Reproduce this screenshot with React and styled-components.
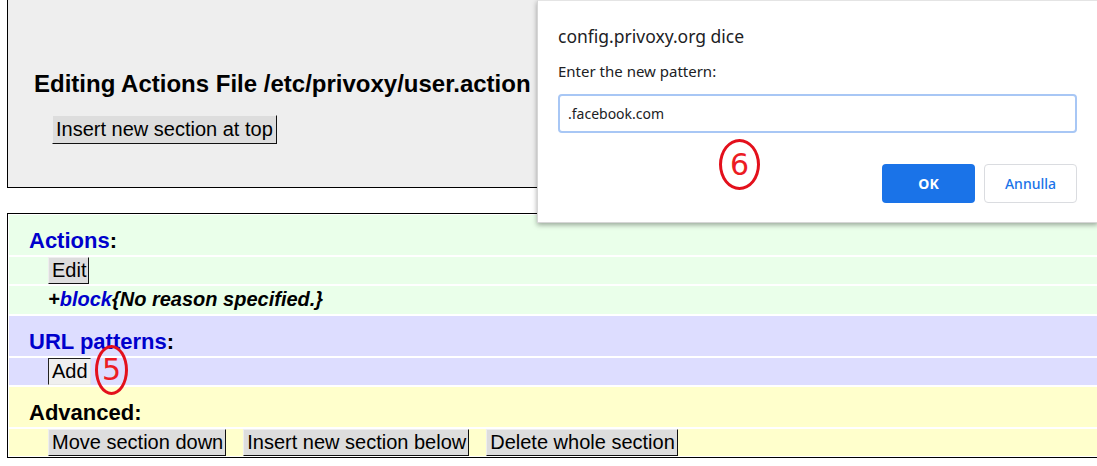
import React from 'react';
import styled, { createGlobalStyle } from 'styled-components';

const GlobalStyle = createGlobalStyle`
    html, body {
        margin: 0;
        padding: 0;
        background: #ffffff;
        overflow: hidden;
    }
    body {
        font-family: "Liberation Sans", Arial, sans-serif;
    }
`

const App = () => {
  return (
    <Page>
        <GlobalStyle />
        <TopBox>
            <Heading>Editing Actions File /etc/privoxy/user.action</Heading>
            <TopButton>Insert new section at top</TopButton>
        </TopBox>

        <SectionTable>
            <SectionHead bg="#eaffea">
                <Label>Actions</Label>:
            </SectionHead>
            <ButtonRow bg="#eaffea">
                <OldButton>Edit</OldButton>
            </ButtonRow>
            <TextRow bg="#eaffea">
                +<ActionName>block</ActionName>{'{No reason specified.}'}
            </TextRow>

            <SectionHead bg="#ddddff">
                <Label>URL patterns</Label>:
            </SectionHead>
            <ButtonRow bg="#ddddff">
                <OldButton pressed>Add</OldButton>
            </ButtonRow>

            <SectionHead bg="#ffffcc">Advanced:</SectionHead>
            <ButtonRow bg="#ffffcc">
                <OldButton>Move section down</OldButton>
                <OldButton>Insert new section below</OldButton>
                <OldButton>Delete whole section</OldButton>
            </ButtonRow>
        </SectionTable>

        <Marker left={95} top={345} w={33} h={50}>5</Marker>

        <PromptDialog>
            <DialogTitle>config.privoxy.org dice</DialogTitle>
            <DialogMessage>Enter the new pattern:</DialogMessage>
            <PromptInput>.facebook.com</PromptInput>
            <DialogActions>
                <PrimaryButton>OK</PrimaryButton>
                <SecondaryButton>Annulla</SecondaryButton>
            </DialogActions>
        </PromptDialog>

        <Marker left={719} top={139} w={41} h={51}>6</Marker>
    </Page>
  )
}

const Page = styled.div`
    position: relative;
    width: 1097px;
    height: 466px;
    overflow: hidden;
    padding-left: 7px;
    box-sizing: border-box;
`

const TopBox = styled.div`
    margin-top: -20px;
    margin-right: -6px;
    border: 1px solid #000;
    background-color: #eeeeee;
    padding: 89px 0 43px 26px;
    display: flex;
    flex-direction: column;
    align-items: flex-start;
`

const Heading = styled.h2`
    margin: 0;
    font-size: 24px;
    line-height: 28px;
    font-weight: bold;
    color: #000;
`

const OldButton = styled.button`
    font-family: "Liberation Sans", Arial, sans-serif;
    font-size: 20px;
    line-height: 23px;
    padding: 1px 2px 1px 3px;
    margin: 0;
    color: #000;
    background-color: ${props => props.pressed ? '#efefef' : '#dddddd'};
    border: 1px solid;
    border-color: ${props => props.pressed
        ? '#222 #e6e6e6 #e6e6e6 #222'
        : '#eeeeee #111 #111 #eeeeee'};
    border-radius: 0;
    cursor: pointer;
`

const TopButton = styled(OldButton)`
    margin: 17px 0 0 18px;
    padding: 2px 3px;
`

const SectionTable = styled.div`
    margin-top: 25px;
    margin-right: -6px;
    border: 1px solid #000;
    padding: 1px;
    display: flex;
    flex-direction: column;
    gap: 2px;
    background: #fff;
`

const SectionHead = styled.div`
    background-color: ${props => props.bg};
    padding: 13px 20px 2px;
    font-size: 22px;
    line-height: 25px;
    font-weight: bold;
    color: #000;
`

const Label = styled.span`
    color: #0000cc;
`

const ButtonRow = styled.div`
    background-color: ${props => props.bg};
    padding-left: 39px;
    display: flex;
    gap: 17px;
    height: 27px;
`

const TextRow = styled.div`
    background-color: ${props => props.bg};
    padding: 2px 0 3px 39px;
    font-size: 20px;
    line-height: 23px;
    font-weight: bold;
    font-style: italic;
    color: #000;
`

const ActionName = styled.span`
    color: #0000cc;
`

const PromptDialog = styled.div`
    position: absolute;
    left: 537px;
    top: 0;
    width: 561px;
    box-sizing: border-box;
    padding: 23px 20px 19px;
    background: #fff;
    border: 1px solid #d6d6d6;
    border-top-color: #e4e4e4;
    box-shadow: 0 2px 5px rgba(0, 0, 0, 0.35);
    font-family: "Noto Sans", "Open Sans", sans-serif;
    color: #202124;
`

const DialogTitle = styled.div`
    font-size: 17.5px;
    line-height: 24px;
`

const DialogMessage = styled.div`
    margin-top: 13px;
    font-size: 15px;
    line-height: 20px;
`

const PromptInput = styled.div`
    margin-top: 13px;
    height: 39px;
    box-sizing: border-box;
    border: 2px solid #a8c7f5;
    border-radius: 4px;
    padding: 0 8px;
    display: flex;
    align-items: center;
    font-size: 14px;
    color: #202124;
`

const DialogActions = styled.div`
    margin-top: 31px;
    display: flex;
    justify-content: flex-end;
    gap: 9px;
`

const PrimaryButton = styled.button`
    width: 93px;
    height: 39px;
    border: none;
    border-radius: 4px;
    background-color: #1a73e8;
    color: #fff;
    font-family: "Noto Sans", "Open Sans", sans-serif;
    font-size: 14px;
    font-weight: bold;
    cursor: pointer;
`

const SecondaryButton = styled.button`
    width: 93px;
    height: 39px;
    border: 1px solid #dadce0;
    border-radius: 4px;
    background-color: #fff;
    color: #1a73e8;
    font-family: "Noto Sans", "Open Sans", sans-serif;
    font-size: 14px;
    font-weight: 500;
    cursor: pointer;
`

const Marker = styled.div`
    position: absolute;
    left: ${props => props.left}px;
    top: ${props => props.top}px;
    width: ${props => props.w}px;
    height: ${props => props.h}px;
    box-sizing: border-box;
    border: 3px solid #e3101c;
    border-radius: 50%;
    display: flex;
    align-items: center;
    justify-content: center;
    color: #ec1c24;
    font-family: "DejaVu Sans", "Liberation Sans", sans-serif;
    font-size: 30px;
    line-height: 1;
`

export default App
